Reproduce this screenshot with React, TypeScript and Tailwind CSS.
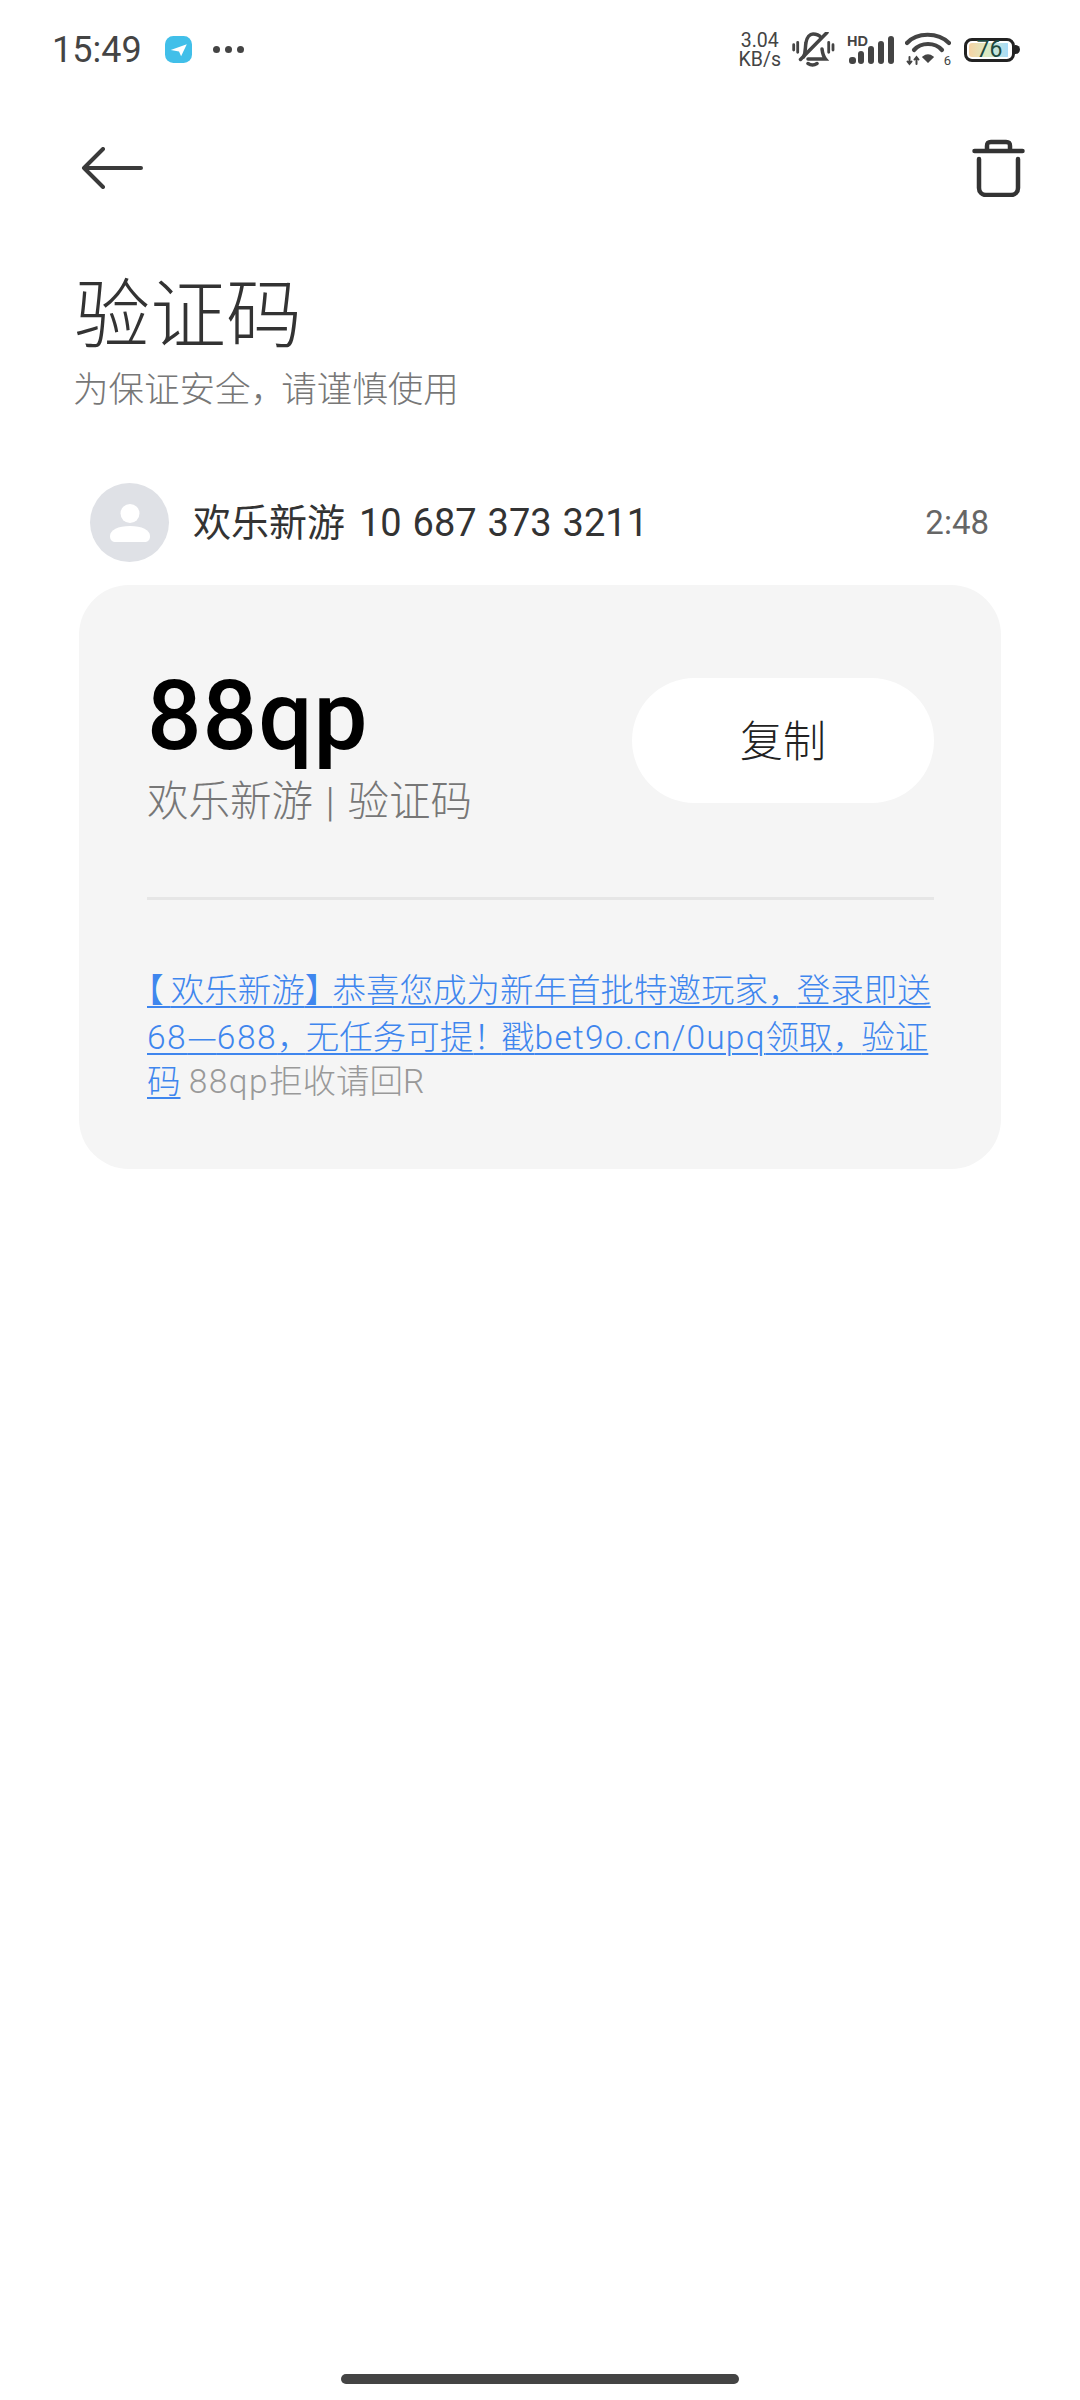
import type { ReactNode } from "react";

const cjk = "font-['Roboto','Noto_Sans_CJK_SC',sans-serif]";

// CJK punctuation set half width, then opened up with tracking
const Punct = ({ children, className }: { children: ReactNode; className: string }) => (
  <span className={`[font-feature-settings:'halt'] ${className}`}>{children}</span>
);

const StatusBar = () => (
  <div className="flex h-[98px] items-center justify-between pl-[52px] pr-[60px] pt-[1px]">
    <div className="flex items-center">
      <span className="text-[36px] leading-none text-[#444]">15:49</span>
      <svg width="27" height="27" viewBox="0 0 26 26" className="ml-[23px]">
        <rect width="26" height="26" rx="8" fill="#41bfe9" />
        <path d="M5.500 13.500 21 8l-5.500 11.500-2-4.500Z" fill="#fff" />
      </svg>
      <div className="ml-[21px] flex gap-[5px]">
        <span className="size-[7px] rounded-full bg-[#444]" />
        <span className="size-[7px] rounded-full bg-[#444]" />
        <span className="size-[7px] rounded-full bg-[#444]" />
      </div>
    </div>
    <div className="flex items-center">
      <div className="flex flex-col items-center text-[19.5px] leading-[19px] text-[#444]">
        <span>3.04</span>
        <span>KB/s</span>
      </div>
      {/* muted bell */}
      <svg width="44" height="36" viewBox="0 0 44 36" className="ml-[11px]" fill="none" stroke="#444" strokeWidth="3.500" strokeLinecap="round">
        <path d="M11.500 25C14 20 13 15 14 10.500 15 5 18 2 21 2c3 0 6 1 8 3.500M30 17c.5 4 1 7 3.500 10H16" />
        <path d="M35 .5 8.500 27.500" />
        <path d="M16 31.500c3 2 6 2 9 0" />
        <path d="M1.700 12.700V18M5.700 10.300v10M36.700 10.300v10M41 12.700V18" strokeWidth="2.800" />
      </svg>
      {/* cell signal */}
      <div className="relative ml-[9px] h-[30px] w-[50px]">
        <span className="absolute left-[2px] top-[-1px] font-['Liberation_Sans'] text-[14.500px] font-bold leading-none text-[#444]">HD</span>
        <svg width="50" height="30" viewBox="0 0 50 30" className="absolute left-0 top-0">
          <rect x="4" y="22" width="7" height="7" rx="3" fill="#444" />
          <rect x="13" y="16" width="6" height="13" rx="3" fill="#444" />
          <rect x="23" y="11" width="6" height="18" rx="3" fill="#444" />
          <rect x="33" y="6" width="6" height="23" rx="3" fill="#444" />
          <rect x="43" y="1" width="6" height="28" rx="3" fill="#444" />
        </svg>
      </div>
      {/* wifi */}
      <div className="relative ml-[10px] h-[36px] w-[46px]">
        <svg width="46" height="36" viewBox="0 0 46 36" fill="none" stroke="#444" strokeLinecap="round">
          <path d="M2 11C12 0 33 0 44 11" strokeWidth="4.200" />
          <path d="M9 18C16 10 30 10 37 18" strokeWidth="4.200" />
          <path d="M18 25c3-2.500 7-2.500 10 0l-5 5Z" fill="#444" strokeWidth="1.500" />
          <path d="M4.500 25v7M2.500 29.500l2 2.500 2-2.500M11.500 32v-7M9.500 27.500l2-2.500 2 2.500" strokeWidth="2" />
        </svg>
        <span className="absolute bottom-[1px] right-[0px] text-[13px] leading-none text-[#444]">6</span>
      </div>
      {/* battery */}
      <div className="ml-[13px] flex items-center">
        <div className="flex h-[24px] w-[51px] items-center justify-center rounded-[8px] border-[3px] border-[#222] bg-[linear-gradient(90deg,#f8d0a0,#dcebc3_45%,#a8dcf8_90%,#fff_90%)] bg-clip-content p-[2px] text-[23px] leading-none text-[#1d4a40]">
          76
        </div>
        <div className="h-[9px] w-[5px] rounded-r-full bg-[#222]" />
      </div>
    </div>
  </div>
);

const App = () => {
  return (
    <div className={`relative flex h-[2400px] w-[1080px] flex-col overflow-hidden bg-white ${cjk}`}>
      <StatusBar />

      {/* toolbar */}
      <div className="mt-[35px] flex h-[70px] items-center justify-between pl-[81px] pr-[55px]">
        <svg width="62" height="42" viewBox="0 0 62 42" fill="none" stroke="#3a3a3a" strokeWidth="4" strokeLinecap="round" strokeLinejoin="round">
          <path d="M60 21H3M22 2 3 21l19 19" />
        </svg>
        <svg width="53" height="58" viewBox="0 0 53 58" fill="none" stroke="#333" strokeWidth="4.500" strokeLinecap="round" strokeLinejoin="round">
          <path d="M2.500 12h48M15 11V7c0-3 1-4 4-4h15c3 0 4 1 4 4v4" />
          <path d="M7 20v29c0 4 3 7 7 7h25c4 0 7-3 7-7V20" />
        </svg>
      </div>

      {/* heading */}
      <div className="mt-[68px] pl-[74px]">
        <h1 className="text-[76px] font-light leading-[90px] text-[#333]">验证码</h1>
        <p className="-ml-[1px] mt-[4px] text-[35.500px] font-light leading-[50px] text-[#777]">
          为保证安全<Punct className="tracking-[13px]">，</Punct>请谨慎使用
        </p>
      </div>

      {/* sender */}
      <div className="mt-[68px] flex items-center pl-[90px] pr-[91px]">
        <div className="flex size-[79px] items-center justify-center rounded-full bg-[#dfe1e6]">
          <svg width="40" height="38" viewBox="0 0 40 38" fill="#fff">
            <circle cx="20" cy="9.500" r="9.500" />
            <path d="M0 32c0-6 8-10 20-10s20 4 20 10c0 4-2 6-6 6H6c-4 0-6-2-6-6Z" />
          </svg>
        </div>
        <span className="ml-[24px] text-[38px] leading-none text-[#333] [word-spacing:1.500px]">
          欢乐新游 <span className="ml-[3px]">10 687 373 3211</span>
        </span>
        <span className="ml-auto text-[33px] leading-none text-[#666]">2:48</span>
      </div>

      {/* code card */}
      <div className="mx-[79px] mt-[23px] flex h-[584px] flex-col rounded-[50px] bg-[#f5f5f5] pl-[68px] pr-[67px] pt-[86px]">
        <div className="flex items-start justify-between">
          <div>
            <div className="text-[96px] font-medium leading-[90px] tracking-[1px] text-black">88qp</div>
            <div className="mt-[16px] text-[41.500px] font-light leading-[50px] text-[#777] [word-spacing:2.500px]">欢乐新游 | 验证码</div>
          </div>
          <button className="mt-[7px] h-[125px] w-[302px] rounded-full bg-white pt-[3px] text-[43px] font-light text-[#222]">复制</button>
        </div>
        <div className="mt-[70px] h-[3px] shrink-0 bg-[#e6e6e6]" />
        <p className="mt-[69px] text-[33.500px] font-light leading-[44px] text-[#999]">
          <span className="text-[#3f86ee] underline decoration-2 underline-offset-[4px]">
            <Punct className="tracking-[7px]">【</Punct>欢乐新游<Punct className="tracking-[11px]">】</Punct>恭喜您成为新年首批特邀玩家<Punct className="tracking-[12px]">，</Punct>登录即送
            <br />
            <span className="tracking-[1.500px]">68</span>
            <span className="font-['Noto_Sans_CJK_SC']">—</span>
            <span className="tracking-[1.500px]">688</span>
            <Punct className="tracking-[12px]">，</Punct>无任务可提<Punct className="tracking-[11px]">！</Punct>戳<span className="tracking-[1.200px]">bet9o.cn/0upq</span>领取<Punct className="tracking-[12px]">，</Punct>验证
            <br />码
          </span>{" "}
          <span className="tracking-[1.500px]">88qp</span>拒收请回R
        </p>
      </div>

      {/* gesture bar */}
      <div className="absolute bottom-[16px] left-[341px] h-[10px] w-[398px] rounded-full bg-[#444]" />
    </div>
  );
};

export default App;
